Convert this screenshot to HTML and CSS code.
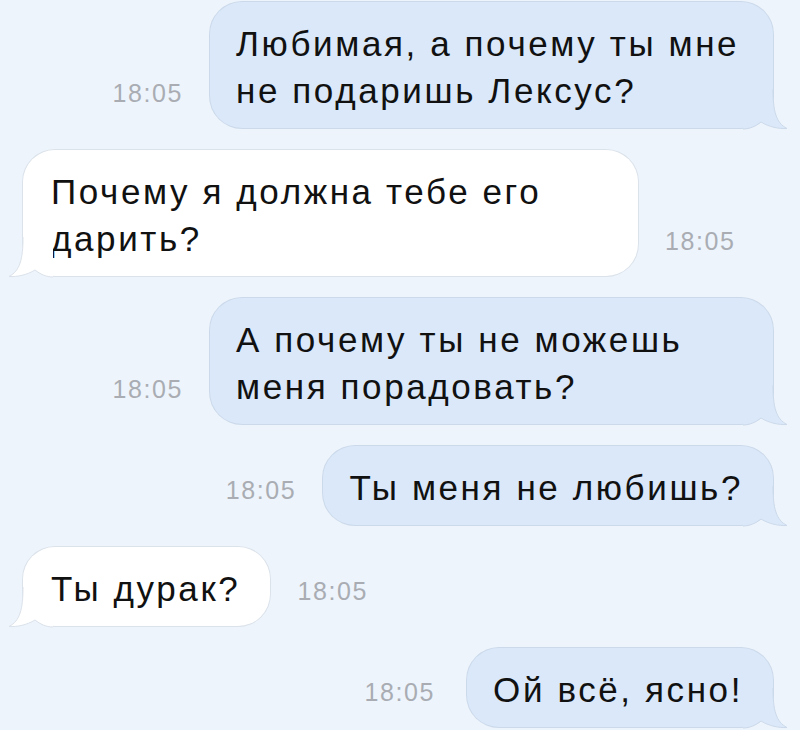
FILE: index.html
```html
<!DOCTYPE html>
<html lang="ru">
<head>
<meta charset="utf-8">
<title>Чат</title>
<link rel="stylesheet" href="styles.css">
</head>
<body>
<div class="chat">
  <div class="row out">
    <span class="time">18:05</span>
    <div class="bubble bubble-out">Любимая, а почему ты мне не подаришь Лексус?<svg class="tail" viewBox="0 0 44 40" aria-hidden="true"><path class="tail-fill" d="M0 0 L30 0 C30 22 33 34 44 39.5 C36 40 26 38 18 33 C13 37 7 40 0 40 Z"/><path class="tail-line" d="M30 0 C30 22 33 34 44 39.5 C36 40 26 38 18 33 C13 37 7 40 0 40"/></svg></div>
  </div>
  <div class="row in">
    <div class="bubble bubble-in wide">Почему я должна тебе его дарить?<svg class="tail" viewBox="0 0 44 40" aria-hidden="true"><path class="tail-fill" d="M44 0 L14 0 C14 22 11 34 0 39.5 C8 40 18 38 26 33 C31 37 37 40 44 40 Z"/><path class="tail-line" d="M14 0 C14 22 11 34 0 39.5 C8 40 18 38 26 33 C31 37 37 40 44 40"/></svg></div>
    <span class="time">18:05</span>
  </div>
  <div class="row out">
    <span class="time">18:05</span>
    <div class="bubble bubble-out">А почему ты не можешь меня порадовать?<svg class="tail" viewBox="0 0 44 40" aria-hidden="true"><path class="tail-fill" d="M0 0 L30 0 C30 22 33 34 44 39.5 C36 40 26 38 18 33 C13 37 7 40 0 40 Z"/><path class="tail-line" d="M30 0 C30 22 33 34 44 39.5 C36 40 26 38 18 33 C13 37 7 40 0 40"/></svg></div>
  </div>
  <div class="row out">
    <span class="time">18:05</span>
    <div class="bubble bubble-out">Ты меня не любишь?<svg class="tail" viewBox="0 0 44 40" aria-hidden="true"><path class="tail-fill" d="M0 0 L30 0 C30 22 33 34 44 39.5 C36 40 26 38 18 33 C13 37 7 40 0 40 Z"/><path class="tail-line" d="M30 0 C30 22 33 34 44 39.5 C36 40 26 38 18 33 C13 37 7 40 0 40"/></svg></div>
  </div>
  <div class="row in">
    <div class="bubble bubble-in">Ты дурак?<svg class="tail" viewBox="0 0 44 40" aria-hidden="true"><path class="tail-fill" d="M44 0 L14 0 C14 22 11 34 0 39.5 C8 40 18 38 26 33 C31 37 37 40 44 40 Z"/><path class="tail-line" d="M14 0 C14 22 11 34 0 39.5 C8 40 18 38 26 33 C31 37 37 40 44 40"/></svg></div>
    <span class="time">18:05</span>
  </div>
  <div class="row out last">
    <span class="time">18:05</span>
    <div class="bubble bubble-out">Ой всё, ясно!<svg class="tail" viewBox="0 0 44 40" aria-hidden="true"><path class="tail-fill" d="M0 0 L30 0 C30 22 33 34 44 39.5 C36 40 26 38 18 33 C13 37 7 40 0 40 Z"/><path class="tail-line" d="M30 0 C30 22 33 34 44 39.5 C36 40 26 38 18 33 C13 37 7 40 0 40"/></svg></div>
  </div>
</div>
</body>
</html>
```
FILE: styles.css
```css
html, body {
  margin: 0;
  padding: 0;
  background: #eef4fb;
}

body {
  font-family: "Liberation Sans", Arial, sans-serif;
  color: #111;
  width: 800px;
  height: 730px;
  overflow: hidden;
}

.chat {
  display: flex;
  flex-direction: column;
  gap: 22px;
  padding: 2px 27px 0 23px;
}

.row {
  display: flex;
  align-items: flex-end;
  gap: 27px;
}

.row.out {
  justify-content: flex-end;
}

.row.in {
  justify-content: flex-start;
}

.row.last {
  gap: 32px;
}

.time {
  font-size: 25px;
  line-height: 26px;
  color: #a9adb3;
  margin-bottom: 22px;
  letter-spacing: 1.6px;
  white-space: nowrap;
}

.bubble {
  position: relative;
  font-size: 35px;
  line-height: 47px;
  letter-spacing: 2.6px;
  padding: 18px 30px 14px 26px;
  border-radius: 32px;
}

.bubble-out {
  background: #dae8fa;
  box-shadow: 0 0 0 1px #cbd9ea;
  max-width: 563px;
  box-sizing: border-box;
}

.bubble-in {
  background: #ffffff;
  box-shadow: 0 0 0 1px #dbe2ea;
  box-sizing: border-box;
  padding-left: 28px;
}

.bubble-in.wide {
  width: 615px;
}

.tail {
  position: absolute;
  bottom: -1px;
  width: 44px;
  height: 40px;
  overflow: visible;
}

.bubble-out .tail {
  right: -14px;
}

.bubble-in .tail {
  left: -14px;
}

.bubble-out .tail-fill {
  fill: #dae8fa;
}

.bubble-in .tail-fill {
  fill: #ffffff;
}

.tail-line {
  fill: none;
  stroke-width: 1;
}

.bubble-out .tail-line {
  stroke: #cbd9ea;
}

.bubble-in .tail-line {
  stroke: #dbe2ea;
}
```
